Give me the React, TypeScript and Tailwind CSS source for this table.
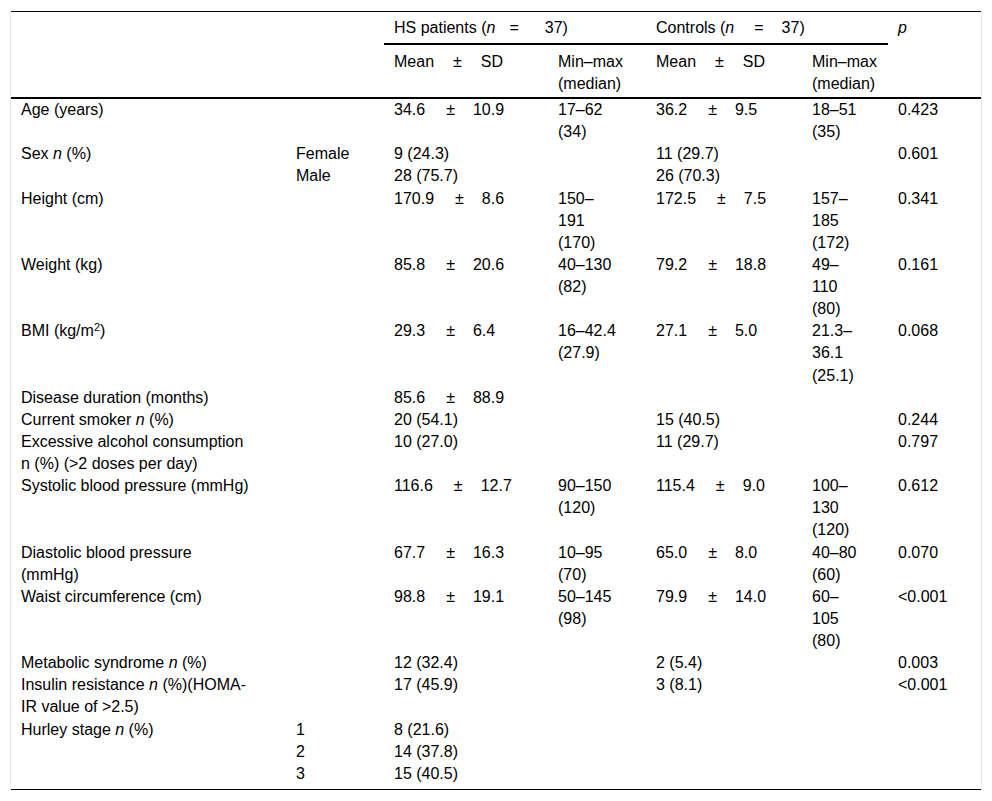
import React from "react";

type Row = {
  label?: React.ReactNode[];
  sub?: string;
  hs?: [string, string] | string;
  hsRange?: string[];
  ct?: [string, string] | string;
  ctRange?: string[];
  p?: string;
};

const N = () => <i>n</i>;

const rows: Row[] = [
  { label: ["Age (years)"], hs: ["34.6", "10.9"], hsRange: ["17–62", "(34)"], ct: ["36.2", "9.5"], ctRange: ["18–51", "(35)"], p: "0.423" },
  { label: [<>Sex <N /> (%)</>], sub: "Female", hs: "9 (24.3)", ct: "11 (29.7)", p: "0.601" },
  { sub: "Male", hs: "28 (75.7)", ct: "26 (70.3)" },
  { label: ["Height (cm)"], hs: ["170.9", "8.6"], hsRange: ["150–", "191", "(170)"], ct: ["172.5", "7.5"], ctRange: ["157–", "185", "(172)"], p: "0.341" },
  { label: ["Weight (kg)"], hs: ["85.8", "20.6"], hsRange: ["40–130", "(82)"], ct: ["79.2", "18.8"], ctRange: ["49–", "110", "(80)"], p: "0.161" },
  { label: [<>BMI (kg/m<sup className="text-[11px]">2</sup>)</>], hs: ["29.3", "6.4"], hsRange: ["16–42.4", "(27.9)"], ct: ["27.1", "5.0"], ctRange: ["21.3–", "36.1", "(25.1)"], p: "0.068" },
  { label: ["Disease duration (months)"], hs: ["85.6", "88.9"] },
  { label: [<>Current smoker <N /> (%)</>], hs: "20 (54.1)", ct: "15 (40.5)", p: "0.244" },
  { label: ["Excessive alcohol consumption", "n (%) (>2 doses per day)"], hs: "10 (27.0)", ct: "11 (29.7)", p: "0.797" },
  { label: ["Systolic blood pressure (mmHg)"], hs: ["116.6", "12.7"], hsRange: ["90–150", "(120)"], ct: ["115.4", "9.0"], ctRange: ["100–", "130", "(120)"], p: "0.612" },
  { label: ["Diastolic blood pressure", "(mmHg)"], hs: ["67.7", "16.3"], hsRange: ["10–95", "(70)"], ct: ["65.0", "8.0"], ctRange: ["40–80", "(60)"], p: "0.070" },
  { label: ["Waist circumference (cm)"], hs: ["98.8", "19.1"], hsRange: ["50–145", "(98)"], ct: ["79.9", "14.0"], ctRange: ["60–", "105", "(80)"], p: "<0.001" },
  { label: [<>Metabolic syndrome <N /> (%)</>], hs: "12 (32.4)", ct: "2 (5.4)", p: "0.003" },
  { label: [<>Insulin resistance <N /> (%)(HOMA-</>, "IR value of >2.5)"], hs: "17 (45.9)", ct: "3 (8.1)", p: "<0.001" },
  { label: [<>Hurley stage <N /> (%)</>], sub: "1", hs: "8 (21.6)" },
  { sub: "2", hs: "14 (37.8)" },
  { sub: "3", hs: "15 (40.5)" },
];

const cols = "grid grid-cols-[275px_98px_164px_98px_156px_86px_93px]";

function Lines({ items }: { items?: React.ReactNode[] }) {
  return (
    <div className="pl-[10px] whitespace-nowrap">
      {items?.map((it, i) => (
        <div key={i}>{it}</div>
      ))}
    </div>
  );
}

function MeanSd({ v }: { v?: [string, string] | string }) {
  if (!v) return <div className="pl-[10px]" />;
  if (typeof v === "string") return <div className="pl-[10px] whitespace-nowrap">{v}</div>;
  return (
    <div className="pl-[10px] whitespace-nowrap">
      {v[0]}
      <span className="ml-[21px] mr-[18px]">±</span>
      {v[1]}
    </div>
  );
}

export default function App() {
  return (
    <div className="bg-white min-h-screen pt-[11px] pl-[10px] font-['Liberation_Sans',Arial,sans-serif] text-[16px] text-black">
      <div className="w-[972px] border-x border-[#e8e8e8]">
        <div className="border-t border-black">
          {/* header */}
          <div className={`${cols} border-b-2 border-black leading-[22px]`}>
            <div className="row-span-2" />
            <div className="row-span-2" />
            <div className="col-span-2 pl-[10px] pt-[5px] pb-[4px] border-b-2 border-black whitespace-nowrap">
              HS patients (<i>n</i>
              <span className="ml-[14px] mr-[26px]">=</span>37)
            </div>
            <div className="col-span-2 pl-[10px] pt-[5px] pb-[4px] border-b-2 border-black whitespace-nowrap">
              Controls (<i>n</i>
              <span className="ml-[20px] mr-[18px]">=</span>37)
            </div>
            <div className="row-span-2 pl-[10px] pt-[5px]">
              <i>p</i>
            </div>
            <div className="pl-[10px] pt-[6px] pb-[2px] whitespace-nowrap">
              Mean<span className="ml-[19px] mr-[19px]">±</span>SD
            </div>
            <div className="pl-[10px] pt-[6px] pb-[2px]">
              <div>Min–max</div>
              <div>(median)</div>
            </div>
            <div className="pl-[10px] pt-[6px] pb-[2px] whitespace-nowrap">
              Mean<span className="ml-[19px] mr-[19px]">±</span>SD
            </div>
            <div className="pl-[10px] pt-[6px] pb-[2px]">
              <div>Min–max</div>
              <div>(median)</div>
            </div>
          </div>

          {/* body */}
          <div className="leading-[22.13px] pb-[4px] border-b border-black">
            {rows.map((r, i) => (
              <div key={i} className={cols}>
                <Lines items={r.label} />
                <div className="pl-[10px]">{r.sub}</div>
                <MeanSd v={r.hs} />
                <Lines items={r.hsRange} />
                <MeanSd v={r.ct} />
                <Lines items={r.ctRange} />
                <div className="pl-[10px]">{r.p}</div>
              </div>
            ))}
          </div>
        </div>
      </div>
    </div>
  );
}
